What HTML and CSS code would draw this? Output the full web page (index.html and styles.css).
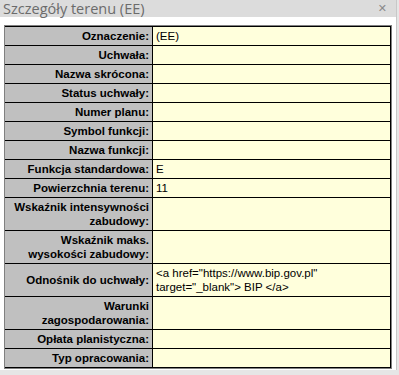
FILE: index.html
```html
<!DOCTYPE html>
<html lang="pl">
<head>
    <meta charset="UTF-8">
    <meta name="viewport" content="width=device-width, initial-scale=1.0">
    <title>Szczegóły terenu (EE)</title>
    <link rel="stylesheet" href="styles.css">
</head>
<body>
    <div class="dialog">
        <div class="dialog-header">
            <span class="dialog-title">Szczegóły terenu (EE)</span>
            <span class="dialog-close">&#x2715;</span>
        </div>
        <div class="dialog-body">
            <table class="details">
                <tr><td class="label">Oznaczenie:</td><td class="value">(EE)</td></tr>
                <tr><td class="label">Uchwała:</td><td class="value"></td></tr>
                <tr><td class="label">Nazwa skrócona:</td><td class="value"></td></tr>
                <tr><td class="label">Status uchwały:</td><td class="value"></td></tr>
                <tr><td class="label">Numer planu:</td><td class="value"></td></tr>
                <tr><td class="label">Symbol funkcji:</td><td class="value"></td></tr>
                <tr><td class="label">Nazwa funkcji:</td><td class="value"></td></tr>
                <tr><td class="label">Funkcja standardowa:</td><td class="value">E</td></tr>
                <tr><td class="label">Powierzchnia terenu:</td><td class="value">11</td></tr>
                <tr><td class="label">Wskaźnik intensywności zabudowy:</td><td class="value"></td></tr>
                <tr><td class="label">Wskaźnik maks. wysokości zabudowy:</td><td class="value"></td></tr>
                <tr><td class="label">Odnośnik do uchwały:</td><td class="value">&lt;a href="https://www.bip.gov.pl" target="_blank"&gt; BIP &lt;/a&gt;</td></tr>
                <tr><td class="label">Warunki zagospodarowania:</td><td class="value"></td></tr>
                <tr><td class="label">Opłata planistyczna:</td><td class="value"></td></tr>
                <tr><td class="label">Typ opracowania:</td><td class="value"></td></tr>
            </table>
        </div>
    </div>
</body>
</html>
```

FILE: styles.css
```css
body {
    margin: 0;
    padding: 0;
    background-color: #e6e6e6;
    font-family: "Liberation Sans", Arial, sans-serif;
}

.dialog {
    width: 397px;
    height: 370px;
    background-color: #fff;
    border-right: 1px solid #c8c8c8;
    box-sizing: border-box;
}

.dialog-header {
    display: flex;
    align-items: center;
    justify-content: space-between;
    height: 17px;
    padding: 0 9px 0 3px;
    background-color: #dcdcdc;
}

.dialog-title {
    font-family: "Open Sans", "Noto Sans", sans-serif;
    font-size: 14.5px;
    color: #6b6b6b;
    line-height: 17px;
}

.dialog-close {
    font-family: "DejaVu Sans", sans-serif;
    font-size: 11px;
    color: #8a8a8a;
}

.dialog-body {
    padding: 8px 0 0 4px;
}

.details {
    width: 388px;
    border-collapse: separate;
    border-spacing: 0;
    border: 1px solid #808080;
    font-size: 11.5px;
    line-height: 14px;
}

.details td {
    padding: 2px 3px;
    border-bottom: 1px solid #000;
    vertical-align: middle;
}

.details tr:first-child td {
    border-top: 1px solid #000;
}

.label {
    width: 141px;
    background-color: #c0c0c0;
    border-right: 1px solid #000;
    text-align: right;
    font-weight: bold;
    color: #000;
}

.value {
    background-color: #ffffdc;
    border-right: 1px solid #000;
    color: #000;
}
```
